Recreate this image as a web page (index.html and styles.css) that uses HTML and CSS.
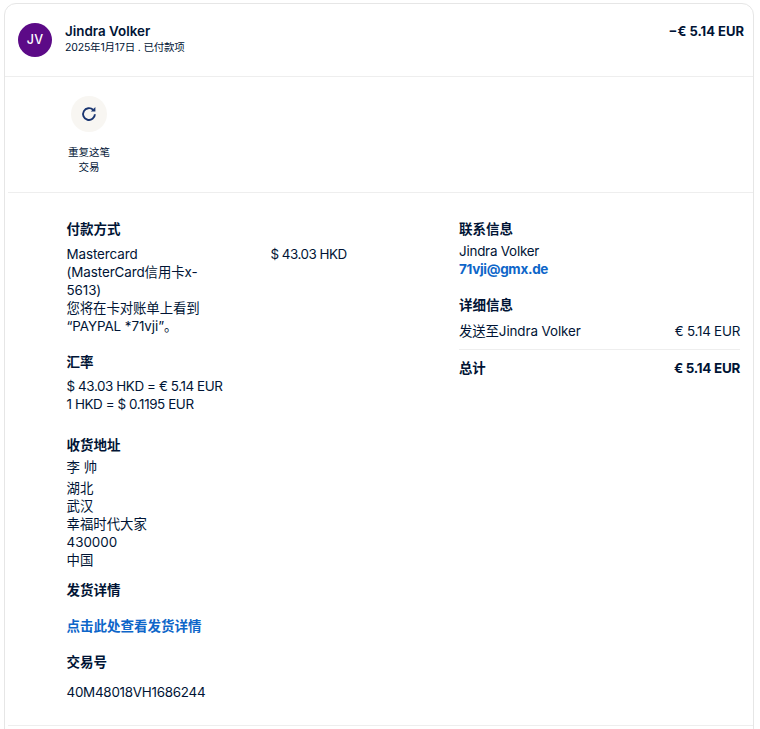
FILE: index.html
```html
<!DOCTYPE html>
<html lang="zh">
<head>
<meta charset="utf-8">
<title>交易详情</title>
<link rel="stylesheet" href="styles.css">
</head>
<body>
<main class="card">
  <header class="head">
    <div class="avatar">JV</div>
    <div class="who">
      <div class="name">Jindra Volker</div>
      <div class="date">2025年1月17日 . 已付款项</div>
    </div>
    <div class="amount">−€ 5.14 EUR</div>
  </header>
  <section class="actions">
    <div class="action">
      <div class="action-icon">
        <svg width="16" height="16" viewBox="0 0 16 16" fill="none" stroke="#1a3570" stroke-width="1.9">
          <path d="M13.9 8.2a5.9 5.9 0 1 1-1.8-4.4"/>
          <path d="M14.4 1v4.6H9.8z" fill="#1a3570" stroke="none"/>
        </svg>
      </div>
      <div class="action-label">重复这笔交易</div>
    </div>
  </section>
  <section class="details">
    <div class="col-left">
      <div class="pay">
        <h3 class="title">付款方式</h3>
        <div class="pay-row">
          <div class="pay-text">Mastercard<br>(MasterCard信用卡x-5613)<br>您将在卡对账单上看到“PAYPAL *71vji”。</div>
          <div class="pay-amt">$ 43.03 HKD</div>
        </div>
      </div>
      <div class="rate">
        <h3 class="title">汇率</h3>
        <div class="text">$ 43.03 HKD = € 5.14 EUR<br>1 HKD = $ 0.1195 EUR</div>
      </div>
      <div class="addr">
        <h3 class="title">收货地址</h3>
        <div class="addr-name">李 帅</div>
        <div class="text">湖北<br>武汉<br>幸福时代大家<br>430000<br>中国</div>
      </div>
      <div class="ship">
        <h3 class="title">发货详情</h3>
        <a class="link ship-link" href="#">点击此处查看发货详情</a>
      </div>
      <div class="txn">
        <h3 class="title">交易号</h3>
        <div class="txn-id">40M48018VH1686244</div>
      </div>
    </div>
    <div class="col-right">
      <div class="contact">
        <h3 class="title">联系信息</h3>
        <div class="text contact-text">Jindra Volker<br><a class="link email" href="#">71vji@gmx.de</a></div>
      </div>
      <div class="info">
        <h3 class="title">详细信息</h3>
        <div class="line"><span>发送至Jindra Volker</span><span>€ 5.14 EUR</span></div>
        <div class="line total"><span>总计</span><span>€ 5.14 EUR</span></div>
      </div>
    </div>
  </section>
</main>
</body>
</html>
```
FILE: styles.css
```css
* { box-sizing: border-box; }
html, body { height: 100%; }
body {
  margin: 0;
  overflow: hidden;
  background: #fff;
  color: #001435;
  font: 13.4px/18px Inter, "Noto Sans CJK SC", sans-serif;
}
.card {
  margin: 3px 6px 0 4px;
  border: 1px solid #e6e6e6;
  border-radius: 12px;
  height: 760px;
}
.head {
  display: flex;
  height: 73px;
  padding: 19px 9px 0 13px;
  border-bottom: 1px solid #eeeeee;
}
.avatar {
  width: 34px;
  height: 34px;
  border-radius: 50%;
  background: #5c0a87;
  color: #fff;
  font-size: 12.5px;
  font-weight: 500;
  letter-spacing: 0.3px;
  line-height: 34px;
  text-align: center;
  flex: none;
}
.who { margin-left: 13px; flex: 1; }
.name { font-weight: 600; font-size: 13.4px; line-height: 17px; }
.date { font-size: 10.5px; line-height: 16px; letter-spacing: -0.18px; }
.amount { font-weight: 700; font-size: 13px; line-height: 17px; }
.actions {
  height: 116px;
  margin-left: 3px;
  padding: 19px 0 0 57px;
  border-bottom: 1px solid #eeeeee;
}
.action { width: 48px; display: flex; flex-direction: column; align-items: center; }
.action-icon {
  width: 36px;
  height: 36px;
  border-radius: 50%;
  background: #f8f6f2;
  display: flex;
  align-items: center;
  justify-content: center;
}
.action-label { margin-top: 13px; font-size: 10.5px; line-height: 15px; text-align: center; width: 44px; }
.details {
  display: flex;
  margin-left: 3px;
  padding: 27px 13px 24px 58.5px;
  border-bottom: 1px solid #eeeeee;
}
.col-left { width: 392.5px; flex: none; }
.col-right { flex: 1; }
.title { margin: 0; font-size: 13.5px; line-height: 18px; font-weight: 700; }
.pay-row { display: flex; margin-top: 7px; }
.pay-text { width: 204px; padding-right: 62px; flex: none; letter-spacing: -0.08px; }
.pay-amt { letter-spacing: -0.5px; }
.rate .text { letter-spacing: -0.4px; }
.txn-id, .line span:last-child { letter-spacing: -0.25px; }
.text { line-height: 18px; }
.rate { margin-top: 18px; }
.rate .text { margin-top: 6px; }
.addr { margin-top: 23px; }
.addr-name { margin-top: 4px; }
.addr .text { margin-top: 3px; }
.ship { margin-top: 12px; }
.ship-link { display: block; margin-top: 18px; }
.link { color: #0d66c9; font-weight: 700; text-decoration: none; font-size: 13.5px; }
.email { letter-spacing: -0.3px; }
.txn { margin-top: 18px; }
.txn-id { margin-top: 12px; }
.contact-text { margin-top: 4px; letter-spacing: -0.22px; }
.info { margin-top: 18px; }
.line { display: flex; justify-content: space-between; margin-top: 8px; }
.line span:first-child { letter-spacing: -0.1px; }
.line.total {
  margin-top: 9px;
  padding-top: 9px;
  border-top: 1px solid #eeeeee;
  font-weight: 700;
}
```
